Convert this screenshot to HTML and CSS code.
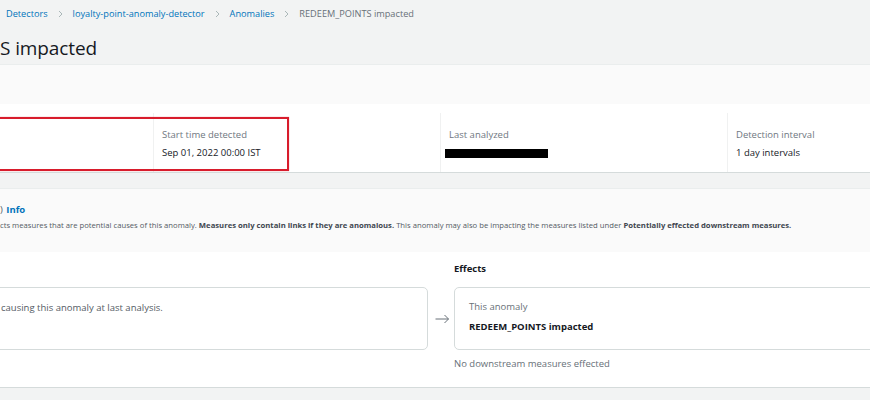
FILE: index.html
```html
<!DOCTYPE html>
<html>
<head>
    <title>REDEEM_POINTS impacted</title>
    <link rel="stylesheet" href="styles.css">
</head>
<body>
    <div class="page-header">
        <nav class="crumbs">
            <a href="#">Detectors</a>
            <svg class="crumb-sep" width="5" height="8" viewBox="0 0 5 8"><path d="M1 1l3 3-3 3" fill="none" stroke="#aab7b8" stroke-width="1"/></svg>
            <a href="#">loyalty-point-anomaly-detector</a>
            <svg class="crumb-sep" width="5" height="8" viewBox="0 0 5 8"><path d="M1 1l3 3-3 3" fill="none" stroke="#aab7b8" stroke-width="1"/></svg>
            <a href="#">Anomalies</a>
            <svg class="crumb-sep" width="5" height="8" viewBox="0 0 5 8"><path d="M1 1l3 3-3 3" fill="none" stroke="#aab7b8" stroke-width="1"/></svg>
            <span class="crumb-current">REDEEM_POINTS impacted</span>
        </nav>
        <h1 class="title">S impacted</h1>
    </div>

    <div class="card">
        <div class="card-head"></div>
        <div class="summary">
            <div class="summary-col"></div>
            <div class="summary-col divided">
                <div class="label">Start time detected</div>
                <div class="value">Sep 01, 2022 00:00 IST</div>
            </div>
            <div class="summary-col divided">
                <div class="label">Last analyzed</div>
                <div class="value"><span class="redacted"></span></div>
            </div>
            <div class="summary-col divided">
                <div class="label">Detection interval</div>
                <div class="value">1 day intervals</div>
            </div>
        </div>
        <!-- highlight drawn around the start time -->
        <div class="highlight"></div>
    </div>

    <div class="card causes">
        <div class="card-head causes-head">
            <div class="causes-title">) <a href="#" class="info-link">Info</a></div>
            <p class="causes-desc">cts measures that are potential causes of this anomaly. <b>Measures only contain links if they are anomalous.</b> This anomaly may also be impacting the measures listed under <b>Potentially effected downstream measures.</b></p>
        </div>
        <div class="flow">
            <div class="flow-col">
                <div class="flow-label">&nbsp;</div>
                <div class="measure-box left-box">
                    <div class="measure-text">causing this anomaly at last analysis.</div>
                </div>
            </div>
            <div class="arrow">
                <svg width="15" height="10" viewBox="0 0 15 10"><path d="M0.5 5h13M9.5 1l4 4-4 4" fill="none" stroke="#687078" stroke-width="1"/></svg>
            </div>
            <div class="flow-col">
                <div class="flow-label">Effects</div>
                <div class="measure-box right-box">
                    <div class="measure-sub">This anomaly</div>
                    <div class="measure-name">REDEEM_POINTS impacted</div>
                </div>
                <div class="flow-note">No downstream measures effected</div>
            </div>
        </div>
    </div>
</body>
</html>
```

FILE: styles.css
```css
body {
    margin: 0;
    background-color: #f2f3f3;
    font-family: "Open Sans", Arial, sans-serif;
    color: #16191f;
    overflow: hidden;
}

a {
    color: #0073bb;
    text-decoration: none;
}

.page-header {
    height: 64px;
}

.crumbs {
    display: flex;
    align-items: center;
    gap: 10px;
    padding: 7px 0 0 6px;
    font-size: 9.2px;
    line-height: 14px;
}

.crumb-current {
    color: #687078;
}

.title {
    margin: 14px 0 0 0;
    font-size: 19px;
    line-height: 26px;
    font-weight: 400;
    letter-spacing: -0.1px;
}

.card {
    position: relative;
    border-top: 1px solid #eaeded;
    border-bottom: 1px solid #d5dbdb;
}

.card-head {
    height: 39px;
    background-color: #fafafa;
}

.summary {
    display: grid;
    grid-template-columns: 153px 287px 287px 1fr;
    height: 59px;
    padding-top: 9px;
    background-color: #fff;
}

.summary-col {
    padding: 15px 0 0 8px;
    font-size: 9.5px;
    line-height: 14px;
}

.divided {
    border-left: 1px solid #f0f1f1;
}

.label {
    color: #6f777f;
}

.value {
    margin-top: 4px;
    height: 14px;
    display: flex;
    align-items: center;
}

.redacted {
    display: block;
    width: 103px;
    height: 9px;
    margin-left: -4px;
    background-color: #000;
}

.highlight {
    position: absolute;
    left: -3px;
    top: 52px;
    width: 288px;
    height: 50px;
    border: 2px solid #d81c2c;
    box-shadow: 0 0 1px rgba(216, 28, 44, 0.5);
}

.causes {
    margin-top: 15px;
}

.causes-head {
    height: 63px;
}

.causes-title {
    padding-top: 14px;
    font-size: 9.5px;
    line-height: 14px;
    color: #545b64;
}

.info-link {
    font-weight: 700;
    margin-left: 1px;
}

.causes-desc {
    margin: 2px 0 0 0;
    font-size: 7.7px;
    line-height: 12px;
    color: #545b64;
}

.causes-desc b {
    color: #414750;
}

.flow {
    display: grid;
    grid-template-columns: 428px 26px 1fr;
    height: 135px;
    background-color: #fff;
}

.flow-label {
    height: 14px;
    margin-top: 10px;
    margin-bottom: 11px;
    font-size: 9.5px;
    line-height: 14px;
    font-weight: 700;
}

.measure-box {
    height: 61px;
    border: 1px solid #d5dbdb;
    border-radius: 5px;
    box-sizing: content-box;
    font-size: 9.5px;
    line-height: 14px;
}

.left-box {
    margin-left: -20px;
    padding-left: 20px;
}

.right-box {
    margin-right: -30px;
    padding-left: 14px;
}

.measure-text {
    padding-top: 13px;
    color: #545b64;
}

.measure-sub {
    padding-top: 12px;
    color: #687078;
}

.measure-name {
    margin-top: 6px;
    font-weight: 700;
}

.arrow {
    display: flex;
    justify-content: center;
    padding-top: 62px;
    padding-left: 2px;
}

.flow-note {
    margin-top: 7px;
    font-size: 9.5px;
    line-height: 14px;
    color: #687078;
}
```
